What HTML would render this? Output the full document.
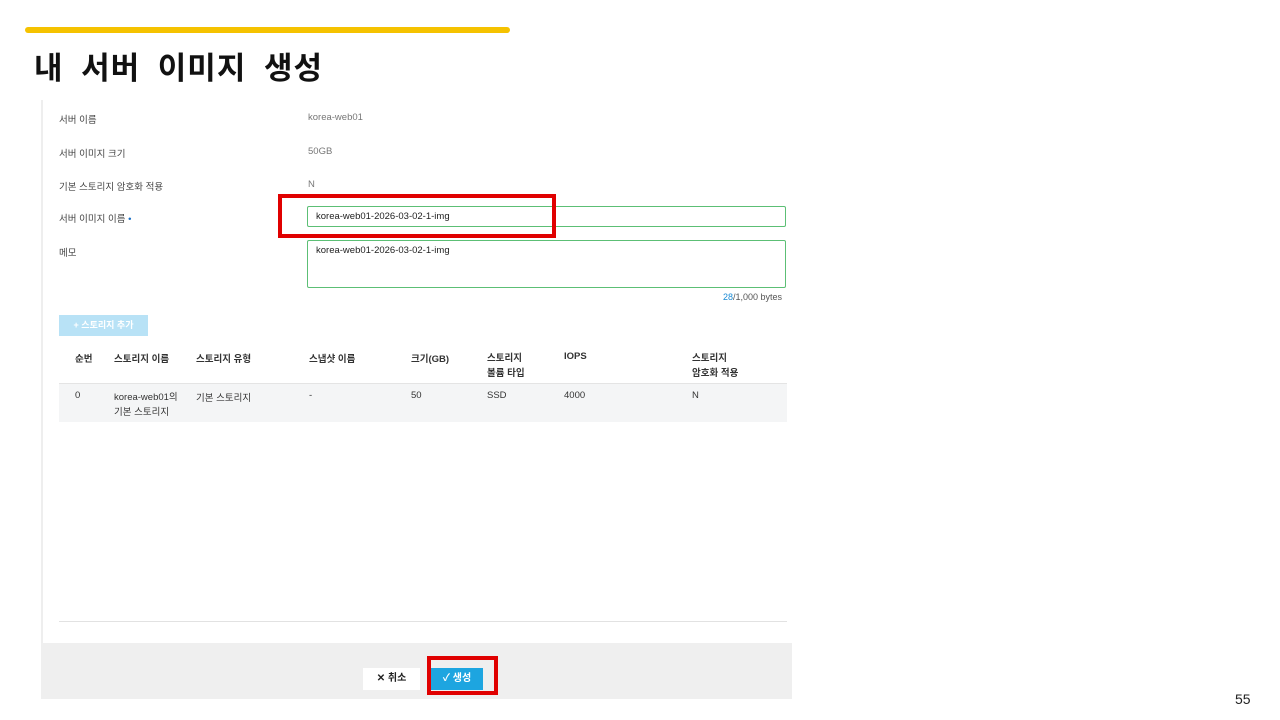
<!DOCTYPE html>
<html><head><meta charset="utf-8"><style>
*{margin:0;padding:0;box-sizing:border-box}
body{width:1280px;height:720px;background:#fff;position:relative;overflow:hidden;font-family:"Liberation Sans","Noto Sans CJK KR",sans-serif;color:#333}
.a{position:absolute;white-space:nowrap}
.s{font-size:9.5px}
.lab{color:#444}
.val{color:#777}
</style></head><body>
<div class="a" style="left:25px;top:27px;width:485px;height:6px;background:#f5c200;border-radius:3px"></div>
<div class="a" style="left:34px;top:43px;font-size:31px;font-weight:bold;color:#111;letter-spacing:1px;word-spacing:8px">내 서버 이미지 생성</div>
<div class="a" style="left:41px;top:100px;width:2px;height:543px;background:#eee"></div>

<div class="a s lab" style="left:59px;top:112px">서버 이름</div>
<div class="a s val" style="left:308px;top:112px">korea-web01</div>
<div class="a s lab" style="left:59px;top:146px">서버 이미지 크기</div>
<div class="a s val" style="left:308px;top:146px">50GB</div>
<div class="a s lab" style="left:59px;top:179px">기본 스토리지 암호화 적용</div>
<div class="a s val" style="left:308px;top:179px">N</div>
<div class="a s lab" style="left:59px;top:211px">서버 이미지 이름 <span style="color:#1a6fc4">•</span></div>
<div class="a" style="left:307px;top:206px;width:479px;height:21px;border:1px solid #5cbf75;border-radius:2px"></div>
<div class="a s" style="left:316px;top:211px;color:#222">korea-web01-2026-03-02-1-img</div>
<div class="a s lab" style="left:59px;top:245px">메모</div>
<div class="a" style="left:307px;top:240px;width:479px;height:48px;border:1px solid #5cbf75;border-radius:2px"></div>
<div class="a s" style="left:316px;top:245px;color:#222">korea-web01-2026-03-02-1-img</div>
<div class="a" style="left:723px;top:292px;font-size:9px;color:#555"><span style="color:#1a8ad4">28</span>/1,000 bytes</div>
<div class="a" style="left:278px;top:194px;width:278px;height:44px;border:4px solid #e00000"></div>

<div class="a" style="left:59px;top:315px;width:89px;height:21px;background:#b8e2f6;color:#fff;font-size:9px;font-weight:bold;line-height:21px;text-align:center">+ 스토리지 추가</div>

<div class="a s" style="left:75px;top:351px;font-weight:bold">순번</div>
<div class="a s" style="left:114px;top:351px;font-weight:bold">스토리지 이름</div>
<div class="a s" style="left:196px;top:351px;font-weight:bold">스토리지 유형</div>
<div class="a s" style="left:309px;top:351px;font-weight:bold">스냅샷 이름</div>
<div class="a s" style="left:411px;top:351px;font-weight:bold">크기(GB)</div>
<div class="a s" style="left:487px;top:351px;font-weight:bold;line-height:15px">스토리지<br>볼륨 타입</div>
<div class="a s" style="left:564px;top:351px;font-weight:bold">IOPS</div>
<div class="a s" style="left:692px;top:351px;font-weight:bold;line-height:15px">스토리지<br>암호화 적용</div>
<div class="a" style="left:59px;top:383px;width:728px;height:39px;background:#f4f5f6;border-top:1px solid #e4e4e4"></div>
<div class="a s" style="left:75px;top:390px">0</div>
<div class="a s" style="left:114px;top:390px;line-height:15px">korea-web01의<br>기본 스토리지</div>
<div class="a s" style="left:196px;top:390px">기본 스토리지</div>
<div class="a s" style="left:309px;top:390px">-</div>
<div class="a s" style="left:411px;top:390px">50</div>
<div class="a s" style="left:487px;top:390px">SSD</div>
<div class="a s" style="left:564px;top:390px">4000</div>
<div class="a s" style="left:692px;top:390px">N</div>

<div class="a" style="left:59px;top:621px;width:728px;height:1px;background:#e2e2e2"></div>
<div class="a" style="left:41px;top:643px;width:751px;height:56px;background:#efefef"></div>
<div class="a" style="left:363px;top:668px;width:57px;height:22px;background:#fff;font-size:10px;font-weight:bold;line-height:22px;text-align:center;color:#222">✕ 취소</div>
<div class="a" style="left:431px;top:668px;width:52px;height:22px;background:#1da5e0;font-size:10px;font-weight:bold;line-height:22px;text-align:center;color:#fff">✓ 생성</div>
<div class="a" style="left:427px;top:656px;width:71px;height:39px;border:4px solid #e00000"></div>

<div class="a" style="left:1235px;top:691px;font-size:14px;color:#222">55</div>
</body></html>
